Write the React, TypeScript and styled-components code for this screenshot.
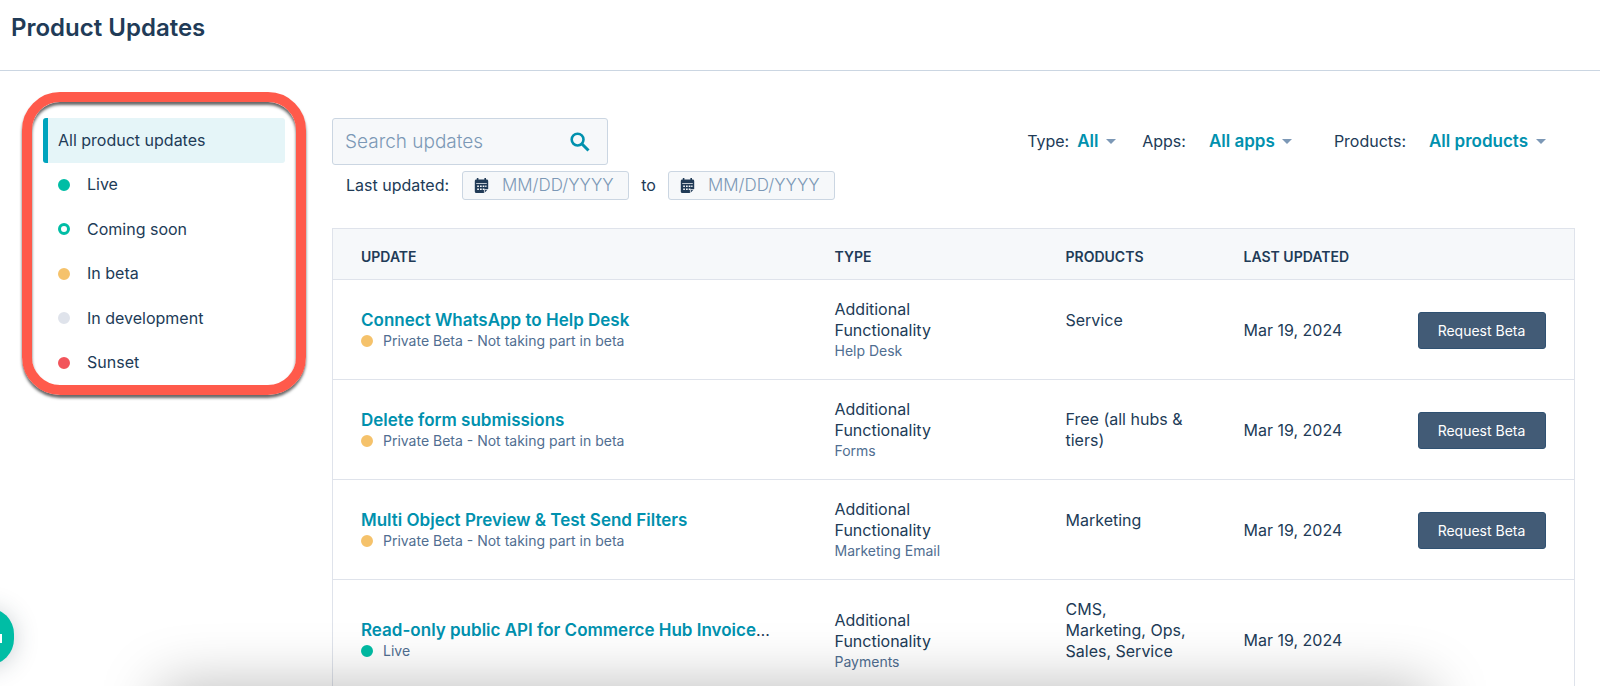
import React from "react";
import styled, { createGlobalStyle } from "styled-components";

const color = {
  heading: "#213b57",
  slate: "#506e91",
  link: "#0091ae",
  accent: "#00a4bd",
  selected: "#e5f5f8",
  line: "#dfe3eb",
  field: "#f6f8fa",
  fieldLine: "#cbd6e2",
  placeholder: "#7c98b6",
  button: "#425b76",
  green: "#00bda5",
  amber: "#f5c26b",
  red: "#f2545b",
  callout: "#ff5a4b",
};

const GlobalStyle = createGlobalStyle`
  *, *::before, *::after { box-sizing: border-box; }
  body {
    margin: 0;
    background: #fff;
    color: ${color.heading};
    font: 400 16px/21px Inter, "Liberation Sans", sans-serif;
  }
  button, input, select { font: inherit; color: inherit; }
`;

const Header = styled.header`
  height: 71px;
  padding: 12px 11px;
  border-bottom: 1px solid ${color.fieldLine};
`;

const Title = styled.h1`
  margin: 0;
  font-size: 24px;
  line-height: 32px;
  font-weight: 600;
`;

const Layout = styled.div`
  display: flex;
  align-items: flex-start;
  gap: 26px;
  padding: 21px 25px 0 22px;
`;

const Callout = styled.nav`
  flex: 0 0 284px;
  padding: 16px 11px 0;
  border: 10px solid ${color.callout};
  border-radius: 38px;
  box-shadow: 0 3px 3px rgba(0, 0, 0, 0.6), inset 0 3px 3px rgba(0, 0, 0, 0.6);
`;

const StatusList = styled.ul`
  display: grid;
  grid-auto-rows: 1fr;
  min-height: 267px;
  margin: 0;
  padding: 0;
  list-style: none;
`;

const StatusLink = styled.a<{ $selected?: boolean }>`
  display: flex;
  align-items: center;
  gap: 17px;
  height: 100%;
  padding-left: ${(p) => (p.$selected ? 10 : 15)}px;
  border-left: ${(p) => (p.$selected ? `5px solid ${color.accent}` : "0")};
  border-radius: 3px;
  background: ${(p) => (p.$selected ? color.selected : "transparent")};
  color: inherit;
  text-decoration: none;
`;

const Dot = styled.span<{ $fill: string; $hollow?: boolean }>`
  flex: none;
  width: 12px;
  height: 12px;
  border: ${(p) => (p.$hollow ? 3 : 6)}px solid ${(p) => p.$fill};
  border-radius: 50%;
`;

const Main = styled.main`
  flex: 1;
  min-width: 0;
  padding-top: 26px;
`;

const Toolbar = styled.div`
  display: flex;
  align-items: center;
  justify-content: space-between;
  padding-right: 29px;
`;

const SearchBox = styled.label`
  display: flex;
  align-items: center;
  width: 276px;
  height: 47px;
  padding: 0 17px 0 12px;
  border: 1px solid ${color.fieldLine};
  border-radius: 3px;
  background: ${color.field};
`;

const TextInput = styled.input`
  flex: 1;
  min-width: 0;
  padding: 0;
  border: 0;
  outline: 0;
  background: transparent;
  font-size: 17px;
  font-weight: 300;
  &::placeholder { color: ${color.placeholder}; opacity: 1; }
`;

const SearchInput = styled(TextInput)`
  font-size: 19px;
`;

const Filters = styled.div`
  display: flex;
  gap: 26px;
`;

const Filter = styled.label<{ $gap: number }>`
  display: flex;
  align-items: center;
  gap: ${(p) => p.$gap}px;
  &:last-child { margin-left: 16px; }
`;

const SelectWrap = styled.span`
  display: flex;
  align-items: center;
  gap: 7px;
`;

const Select = styled.select`
  appearance: none;
  padding: 0;
  border: 0;
  background: transparent;
  color: ${color.link};
  font-size: 17px;
  font-weight: 600;
  cursor: pointer;
`;

const Caret = styled.span`
  border: 5px solid transparent;
  border-top-color: ${color.placeholder};
  border-bottom: 0;
`;

const DateRow = styled.div`
  display: flex;
  align-items: center;
  margin: 6px 0 28px;
  padding-left: 14px;
`;

const RangeText = styled.span`
  width: 39px;
  text-align: center;
`;

const DateLabel = styled.span`
  width: 116px;
`;

const DateField = styled.label`
  display: flex;
  align-items: center;
  gap: 13px;
  width: 167px;
  height: 29px;
  padding: 0 11px;
  border: 1px solid ${color.fieldLine};
  border-radius: 3px;
  background: ${color.field};
`;

const Table = styled.table`
  width: 100%;
  table-layout: fixed;
  border-collapse: collapse;
  border: 1px solid ${color.line};
`;

const HeadCell = styled.th<{ $width?: number }>`
  width: ${(p) => (p.$width ? `${p.$width}px` : "auto")};
  height: 51px;
  padding: 5px 0 0 28px;
  background: ${color.field};
  text-align: left;
  font-size: 14px;
  font-weight: 600;
`;

const Row = styled.tr`
  border-top: 1px solid ${color.line};
`;

const Cell = styled.td`
  padding: 19px 28px 18px;
  vertical-align: middle;
`;

const UpdateTitle = styled.div`
  overflow: hidden;
  text-overflow: ellipsis;
  white-space: nowrap;
`;

const UpdateLink = styled.a`
  color: ${color.link};
  font-size: 17px;
  font-weight: 600;
  text-decoration: none;
`;

const SubText = styled.div`
  display: flex;
  align-items: center;
  gap: 10px;
  min-height: 20px;
  color: ${color.slate};
  font-size: 14px;
  line-height: 20px;
  white-space: nowrap;
`;

const BetaButton = styled.button`
  display: block;
  width: 128px;
  height: 37px;
  padding: 0;
  border: 1px solid #2f5172;
  border-radius: 3px;
  background: ${color.button};
  color: #fff;
  font-size: 14px;
  cursor: pointer;
`;

const ChatButton = styled.button`
  position: fixed;
  left: -46px;
  bottom: 21px;
  display: flex;
  align-items: center;
  justify-content: flex-end;
  width: 60px;
  height: 57px;
  padding: 0 12px 0 0;
  border: 0;
  border-radius: 26px;
  background: ${color.green};
  box-shadow: 0 2px 24px rgba(45, 62, 80, 0.25);
`;

const BottomShade = styled.div`
  position: fixed;
  left: 160px;
  right: 170px;
  top: 100%;
  height: 80px;
  box-shadow: 0 0 60px rgba(0, 0, 0, 0.27);
  pointer-events: none;
`;

const SearchIcon = () => (
  <svg width="20" height="20" viewBox="0 0 20 20" fill="none" stroke={color.link} aria-hidden="true">
    <circle cx="7.6" cy="7.6" r="5.9" strokeWidth="2.6" />
    <path d="M12 12l6.5 6.5" strokeWidth="3" />
  </svg>
);

const CalendarIcon = () => (
  <svg width="15" height="16" viewBox="0 0 15 16" aria-hidden="true">
    <path
      fill={color.heading}
      d="M2.800 0h1.600v1.600h6V0H12v1.600h.7c.9 0 1.500.6 1.500 1.500v8L10.300 15H2.300C1.400 15 .8 14.400.8 13.500V3.100c0-.9.6-1.500 1.500-1.500h.5z"
    />
    <path
      fill={color.field}
      d="M2.200 5.200h10.600V6H2.200zM3.200 7.500h1.700v1.600H3.200zM6 7.500h1.700v1.600H6zM8.700 7.500h1.700v1.600H8.700zM3.200 10.500h1.700v1.600H3.200zM6 10.500h1.700v1.600H6zM8.700 10.500h1.700v1.600H8.700zM11.200 7.500h1.300v1.600h-1.300z"
    />
    <path fill="none" stroke={color.field} strokeWidth="0.800" d="M10.400 15.200v-3.600h4" />
  </svg>
);

const statuses = [
  { label: "Live", fill: color.green },
  { label: "Coming soon", fill: color.green, hollow: true },
  { label: "In beta", fill: color.amber },
  { label: "In development", fill: color.line },
  { label: "Sunset", fill: color.red },
];

const filters = [
  { label: "Type:", value: "All", gap: 8 },
  { label: "Apps:", value: "All apps", gap: 23 },
  { label: "Products:", value: "All products", gap: 23 },
];

type Update = {
  title: string;
  cut?: boolean;
  status: string;
  fill: string;
  area: string;
  products: string[];
  note?: boolean;
  beta: boolean;
};

const betaStatus = "Private Beta - Not taking part in beta";

const updates: Update[] = [
  { title: "Connect WhatsApp to Help Desk", status: betaStatus, fill: color.amber, area: "Help Desk", products: ["Service"], note: true, beta: true },
  { title: "Delete form submissions", status: betaStatus, fill: color.amber, area: "Forms", products: ["Free (all hubs &", "tiers)"], beta: true },
  { title: "Multi Object Preview & Test Send Filters", status: betaStatus, fill: color.amber, area: "Marketing Email", products: ["Marketing"], note: true, beta: true },
  { title: "Read-only public API for Commerce Hub Invoice", cut: true, status: "Live", fill: color.green, area: "Payments", products: ["CMS,", "Marketing, Ops,", "Sales, Service"], note: true, beta: false },
];

const DateInput = ({ label }: { label: string }) => (
  <DateField>
    <CalendarIcon />
    <TextInput aria-label={label} placeholder="MM/DD/YYYY" />
  </DateField>
);

const CellLine = styled.div`
  white-space: nowrap;
`;

export default function App() {
  return (
    <>
      <GlobalStyle />
      <Header>
        <Title>Product Updates</Title>
      </Header>
      <Layout>
        <Callout aria-label="Update status">
          <StatusList>
            <li>
              <StatusLink href="#all" $selected aria-current="page">
                All product updates
              </StatusLink>
            </li>
            {statuses.map((s) => (
              <li key={s.label}>
                <StatusLink href="#status">
                  <Dot $fill={s.fill} $hollow={s.hollow} />
                  {s.label}
                </StatusLink>
              </li>
            ))}
          </StatusList>
        </Callout>
        <Main>
          <Toolbar>
            <SearchBox>
              <SearchInput type="search" aria-label="Search updates" placeholder="Search updates" />
              <SearchIcon />
            </SearchBox>
            <Filters>
              {filters.map((f) => (
                <Filter key={f.label} $gap={f.gap}>
                  {f.label}
                  <SelectWrap>
                    <Select>
                      <option>{f.value}</option>
                    </Select>
                    <Caret />
                  </SelectWrap>
                </Filter>
              ))}
            </Filters>
          </Toolbar>
          <DateRow>
            <DateLabel>Last updated:</DateLabel>
            <DateInput label="Last updated from" />
            <RangeText>to</RangeText>
            <DateInput label="Last updated to" />
          </DateRow>
          <Table>
            <thead>
              <tr>
                <HeadCell>UPDATE</HeadCell>
                <HeadCell $width={231}>TYPE</HeadCell>
                <HeadCell $width={178}>PRODUCTS</HeadCell>
                <HeadCell $width={174}>LAST UPDATED</HeadCell>
                <HeadCell $width={185} aria-label="Actions" />
              </tr>
            </thead>
            <tbody>
              {updates.map((u) => (
                <Row key={u.title}>
                  <Cell>
                    <UpdateTitle>
                      <UpdateLink href="#update">{u.title}</UpdateLink>
                      {u.cut && "…"}
                    </UpdateTitle>
                    <SubText>
                      <Dot $fill={u.fill} />
                      {u.status}
                    </SubText>
                  </Cell>
                  <Cell>
                    <div>Additional</div>
                    <div>Functionality</div>
                    <SubText>{u.area}</SubText>
                  </Cell>
                  <Cell>
                    {u.products.map((line) => (
                      <CellLine key={line}>{line}</CellLine>
                    ))}
                    {u.note && <SubText />}
                  </Cell>
                  <Cell>
                    <CellLine>Mar 19, 2024</CellLine>
                  </Cell>
                  <Cell>{u.beta && <BetaButton type="button">Request Beta</BetaButton>}</Cell>
                </Row>
              ))}
            </tbody>
          </Table>
        </Main>
      </Layout>
      <ChatButton type="button" aria-label="Open chat">
        <svg width="18" height="13" viewBox="0 0 18 13" aria-hidden="true">
          <path fill="#fff" d="M0 4h18v9H0z" />
        </svg>
      </ChatButton>
      <BottomShade />
    </>
  );
}
